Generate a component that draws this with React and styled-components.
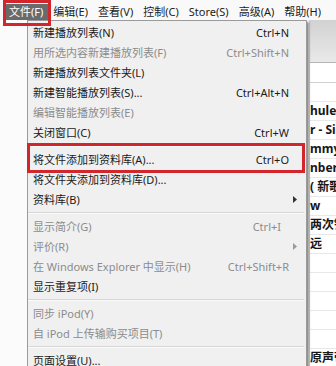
import React from 'react';
import styled, { createGlobalStyle } from 'styled-components';

// Global -->

const GlobalStyle = createGlobalStyle`
  html, body {
    margin: 0;
    padding: 0;
    width: 336px;
    height: 366px;
    overflow: hidden;
    background: #fbfbfb;
  }
  * { box-sizing: border-box; }
`;

const font = `"Noto Sans", "Noto Sans CJK SC", sans-serif`;

// Styled Components -->

const Window = styled.div`
  position: relative;
  width: 336px;
  height: 366px;
  display: flex;
  flex-direction: column;
  font-family: ${font};
  overflow: hidden;
`;

const MenuBar = styled.div`
  height: 20px;
  display: flex;
  align-items: flex-start;
  padding: 4px 0 0 4px;
  background: #f9f9f9;
  position: relative;
  z-index: 3;
`;

const MenuTitle = styled.div`
  position: relative;
  height: 16px;
  line-height: 16px;
  padding: 0 5px;
  font-size: 11px;
  white-space: nowrap;
  color: ${p => (p.open ? '#ffffff' : '#1c1c1c')};
  background: ${p => (p.open ? '#6a6a6a' : 'transparent')};

  ${p => p.marked && `
    &::after {
      content: '';
      position: absolute;
      top: -4px;
      bottom: -6px;
      left: -1px;
      right: -3px;
      border: 3px solid #d3262c;
    }
  `}
`;

const Body = styled.div`
  flex: 1;
  display: flex;
`;

const Sidebar = styled.aside`
  width: 310px;
  background: #fbfbfb;
  border-right: 1px solid #d2d2d2;
`;

const Main = styled.section`
  flex: 1;
  display: flex;
  flex-direction: column;
  background: #ffffff;
  overflow: hidden;
`;

const Toolbar = styled.div`
  height: 43px;
  background: linear-gradient(#d2d2d2, #e9e9e9);
  border-bottom: 1px solid #b4b4b4;
`;

const HeaderRow = styled.div`
  height: 20px;
  border-bottom: 1px solid #d0d0d0;
`;

const Row = styled.div`
  height: 19px;
  line-height: 18px;
  border-bottom: 1px solid #e8e8e8;
  font-size: 12px;
  font-weight: 700;
  color: #161616;
  white-space: nowrap;
  overflow: hidden;
`;

const Dropdown = styled.div`
  position: absolute;
  top: 20px;
  left: 27px;
  width: 280px;
  padding: 1px 0 0;
  background: #f0f0f0;
  border: 1px solid #9a9a9a;
  box-shadow: 2px 2px 2px rgba(0, 0, 0, 0.45);
  z-index: 2;
`;

const Item = styled.div`
  position: relative;
  height: 20px;
  display: grid;
  grid-template-columns: 1fr auto 11px;
  align-items: center;
  padding: 0 6px 0 5px;
  font-size: 11px;
  white-space: nowrap;
  color: ${p => (p.disabled ? '#8c8c8c' : '#1a1a1a')};

  ${p => p.marked && `
    &::after {
      content: '';
      position: absolute;
      top: -6px;
      bottom: -4px;
      left: -1px;
      right: 1px;
      border: 3px solid #d3262c;
    }
  `}
`;

const Shortcut = styled.span`
  text-align: right;
  padding-right: ${p => p.pad || 0}px;
`;

const Arrow = styled.span`
  display: flex;
  justify-content: center;
  align-items: center;
`;

const Separator = styled.div`
  height: 7px;
  margin-right: 2px;
  padding-top: 3px;

  &::before {
    content: '';
    display: block;
    border-top: 1px solid #d6d6d6;
    border-bottom: 1px solid #fbfbfb;
  }
`;

// Data -->

const titles = ['文件(F)', '编辑(E)', '查看(V)', '控制(C)', 'Store(S)', '高级(A)', '帮助(H)'];

const items = [
  { label: '新建播放列表(N)', key: 'Ctrl+N' },
  { label: '用所选内容新建播放列表(F)', key: 'Ctrl+Shift+N', disabled: true },
  { label: '新建播放列表文件夹(L)' },
  { label: '新建智能播放列表(S)...', key: 'Ctrl+Alt+N' },
  { label: '编辑智能播放列表(E)', disabled: true },
  { label: '关闭窗口(C)', key: 'Ctrl+W' },
  'sep',
  { label: '将文件添加到资料库(A)...', key: 'Ctrl+O', marked: true },
  { label: '将文件夹添加到资料库(D)...' },
  { label: '资料库(B)', sub: true },
  'sep',
  { label: '显示简介(G)', key: 'Ctrl+I', pad: 8, disabled: true },
  { label: '评价(R)', sub: true, disabled: true },
  { label: '在 Windows Explorer 中显示(H)', key: 'Ctrl+Shift+R', disabled: true },
  { label: '显示重复项(I)' },
  'sep',
  { label: '同步 iPod(Y)', disabled: true },
  { label: '自 iPod 上传输购买项目(T)', disabled: true },
  'sep',
  { label: '页面设置(U)...' },
];

const rows = ['', 'huleta', 'r - Sin', 'mmy I', 'nber', '( 新歌', 'w', '两次铃', '远', '', '', '', '', '', '原声带'];

// App Component -->

const App = () => {
  return (
    <React.Fragment>
      <GlobalStyle />
      <Window>
        <MenuBar>
          {titles.map((t, i) => (
            <MenuTitle key={t} open={i === 0} marked={i === 0}>{t}</MenuTitle>
          ))}
        </MenuBar>
        <Body>
          <Sidebar />
          <Main>
            <Toolbar />
            <HeaderRow />
            {rows.map((r, i) => (
              <Row key={i}>{r}</Row>
            ))}
          </Main>
        </Body>
        <Dropdown>
          {items.map((it, i) =>
            it === 'sep' ? (
              <Separator key={i} />
            ) : (
              <Item key={i} disabled={it.disabled} marked={it.marked}>
                <span>{it.label}</span>
                <Shortcut pad={it.pad}>{it.key || ''}</Shortcut>
                <Arrow>
                  {it.sub && (
                    <svg width="4" height="7" viewBox="0 0 4 7">
                      <polygon points="0,0 4,3.5 0,7" fill={it.disabled ? '#9a9a9a' : '#333'} />
                    </svg>
                  )}
                </Arrow>
              </Item>
            )
          )}
        </Dropdown>
      </Window>
    </React.Fragment>
  );
};

export default App;
